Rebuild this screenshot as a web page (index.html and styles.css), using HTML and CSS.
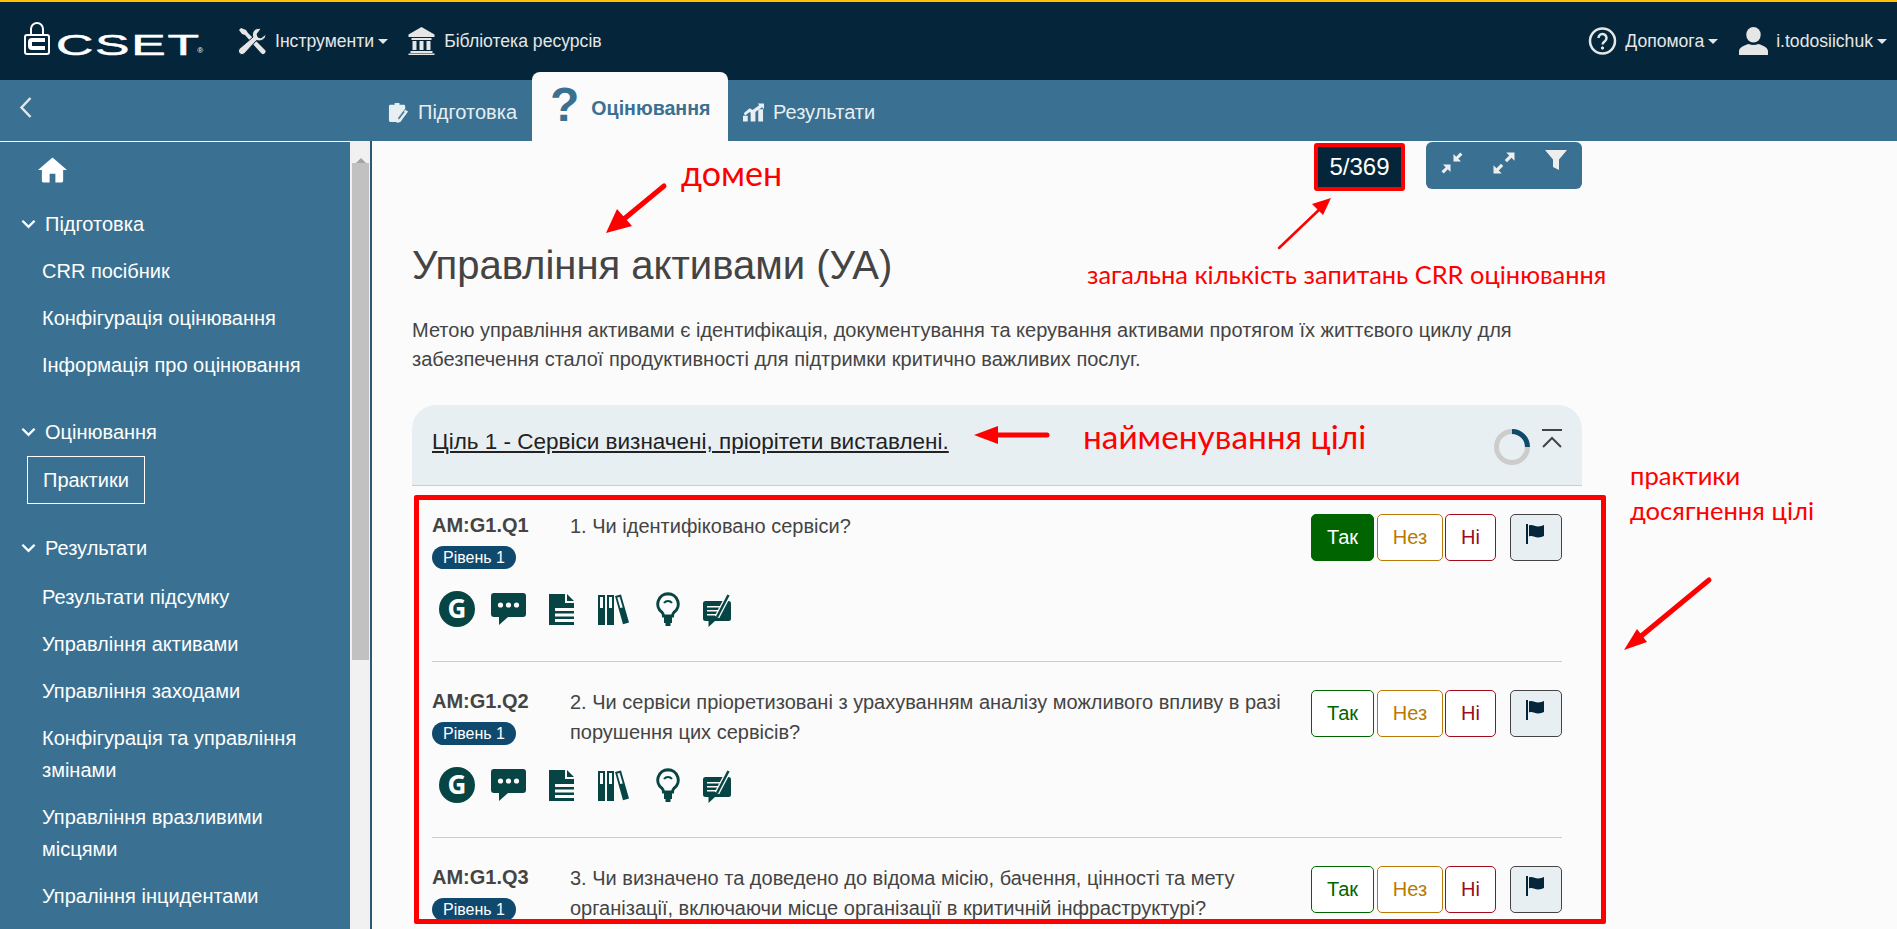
FILE: index.html
```html
<!DOCTYPE html>
<html lang="uk">
<head>
  <meta charset="UTF-8" />
  <meta name="viewport" content="width=device-width, initial-scale=1.0" />
  <title>CSET</title>
  <link rel="stylesheet" href="styles.css">
</head>
<body>

<svg class="sprite" aria-hidden="true">
  <symbol id="i-comment" viewBox="0 0 35 32">
    <path d="M3 0h29a3 3 0 0 1 3 3v18a3 3 0 0 1-3 3H17l-9 8v-8H3a3 3 0 0 1-3-3V3a3 3 0 0 1 3-3z"/>
    <circle cx="9.5" cy="12" r="2.6" fill="#fbfbfb"/><circle cx="17.5" cy="12" r="2.6" fill="#fbfbfb"/><circle cx="25.5" cy="12" r="2.6" fill="#fbfbfb"/>
  </symbol>
  <symbol id="i-doc" viewBox="0 0 25 31">
    <path d="M0 0h16v9h9v22H0z"/><path d="M18 0l7 7h-7z"/>
    <path d="M6 14h19v3H6zM6 19.5h19v3H6zM6 25h19v3H6z" fill="#fbfbfb"/>
  </symbol>
  <symbol id="i-books" viewBox="0 0 31 31">
    <path d="M0 1h7v30H0zM9 1h7v30H9z"/><path d="M17 2l6-1.500 8 28-6 1.700z"/>
    <path d="M2 3h3v11H2zM11 3h3v11h-3z" fill="#fbfbfb"/><path d="M19.300 3.500l2.400-.6 3 10.500-2.400.7z" fill="#fbfbfb"/>
  </symbol>
  <symbol id="i-bulb" viewBox="0 0 24 34">
    <path d="M12 1.700a10.300 10.300 0 0 0-6 18.600c1.200 1 1.500 2 1.500 3.700h9c0-1.700.3-2.700 1.500-3.700a10.300 10.300 0 0 0-6-18.600z" fill="none" stroke="currentColor" stroke-width="3"/>
    <path d="M8 11a5 5 0 0 1 8 0" fill="none" stroke="currentColor" stroke-width="2"/>
    <path d="M8 23h8v8h-1.500v3h-5v-3H8z"/>
  </symbol>
  <symbol id="i-note" viewBox="0 0 28 35">
    <path d="M2.500 9h23a2.500 2.500 0 0 1 2.500 2.500v15a2.500 2.500 0 0 1-2.500 2.500H12l-6.500 6v-6h-3A2.500 2.500 0 0 1 0 26.500v-15A2.500 2.500 0 0 1 2.500 9z"/>
    <path d="M4 14h13v1.600H4zM4 18h11v1.600H4zM4 22h9v1.600H4z" fill="#fbfbfb"/>
    <path d="M14 25L25.500 3" fill="none" stroke="#fbfbfb" stroke-width="5"/>
    <path d="M14 25L25.500 3" fill="none" stroke="currentColor" stroke-width="2.500"/>
  </symbol>
  <symbol id="i-flag" viewBox="0 0 20 20">
    <path d="M0 0h2v20H0zM3 1.500c3-1.500 6 1 9 1s4-1 6-1.500v11c-2 .5-3 1.500-6 1.500s-6-2.500-9-1z"/>
  </symbol>
</svg>

<header class="topbar">
  <a class="logo">
    <svg class="logo-lock" viewBox="0 0 26 33" fill="none" stroke="#fff">
      <path d="M7 13V7a6 6 0 0 1 12 0v6" stroke-width="2"/>
      <rect x="1" y="13" width="24" height="19" rx="2" stroke-width="2"/>
      <path d="M21 18H8a2 2 0 0 0-2 2v4a2 2 0 0 0 2 2h13" stroke-width="4"/>
    </svg>
    <span class="logo-text">CSET</span>
    <span class="logo-mark">®</span>
  </a>
  <a class="top-link">
    <svg class="top-icon" viewBox="0 0 29 28">
      <path d="M3 1L1 3l3 4 3 1 16 18a2.200 2.200 0 0 0 4-3L10 6 8 3z" fill="#e6e6e6"/>
      <path d="M28 7l-5 4-3-1-1-3 4-5c-4-1.500-8 .5-8.500 5-.1 1.500 0 2 .5 3L1.500 21.500a3.500 3.500 0 0 0 5 5L18.500 13.500c4 1.500 9.500-1 9.500-6.500z" fill="#e6e6e6" stroke="#05263a" stroke-width="1"/>
    </svg>
    Інструменти <i class="caret"></i>
  </a>
  <a class="top-link">
    <svg class="top-icon" viewBox="0 0 28 28" fill="#e6e6e6">
      <path d="M14 0l13 7.500V10H1V7.500zM4 11h20v2H4zM5 14h4v9H5zM12 14h4v9h-4zM19 14h4v9h-4zM3 24h22v2H3zM1 26.500h26V28H1z"/>
    </svg>
    Бібліотека ресурсів
  </a>
  <div class="top-right">
    <a class="top-link">
      <svg class="top-icon" viewBox="0 0 29 28" fill="none" stroke="#e6e6e6">
        <circle cx="14.500" cy="14" r="12.500" stroke-width="2.500"/>
        <path d="M10.500 11a4 4 0 1 1 6.300 3.200c-1.500 1-2.300 1.600-2.300 3.300" stroke-width="2.500"/>
        <circle cx="14.500" cy="21" r="1.200" fill="#e6e6e6" stroke-width="1"/>
      </svg>
      Допомога <i class="caret"></i>
    </a>
    <a class="top-link">
      <svg class="top-icon" viewBox="0 0 30 29" fill="#e6e6e6">
        <ellipse cx="15" cy="8" rx="7.500" ry="8"/>
        <path d="M0 29v-4c0-4 5-6 10-7.500 3 1.500 7 1.500 10 0 5 1.500 10 3.500 10 7.500v4z"/>
      </svg>
      i.todosiichuk <i class="caret"></i>
    </a>
  </div>
</header>

<nav class="subnav">
  <a class="back">
    <svg viewBox="0 0 14 23" fill="none" stroke="#e6e6e6" stroke-width="2.500"><path d="M12 2L3 11.500 12 21"/></svg>
  </a>
  <div class="tabs">
    <a class="tab">
      <svg class="tab-icon" viewBox="0 0 20 22">
        <path d="M1.500 3H6V1h5v2h4.500A1.500 1.500 0 0 1 17 4.500V7l-7 9-1 5H1.500A1.500 1.500 0 0 1 0 19.500v-15A1.500 1.500 0 0 1 1.500 3z" fill="#e8eef2"/>
        <path d="M17 8l3 2-8 11-4 1 1-4z" fill="#e8eef2"/>
        <path d="M16 10l-6 8" stroke="#3a7192" stroke-width="1.200"/>
      </svg>
      Підготовка
    </a>
    <a class="tab active"><span class="tab-question">?</span> Оцінювання</a>
    <a class="tab">
      <svg class="tab-icon" viewBox="0 0 22 19" fill="#e8eef2">
        <path d="M0 13h5v6H0zM8 9h5v10H8zM16 6h5v13h-5z"/>
        <path d="M1 10l6-5 3 2 7-5-1.500-2H22v6l-2-2-10 7-3-2-5 4z"/>
      </svg>
      Результати
    </a>
  </div>
</nav>

<div class="layout">
  <aside class="sidebar">
    <a class="home">
      <svg viewBox="0 0 30 26" fill="#fff"><path d="M15 0l15 13h-4v11.500a1.500 1.500 0 0 1-1.500 1.500H18v-9h-6v9H5.500A1.500 1.500 0 0 1 4 24.500V13H0z"/></svg>
    </a>

    <div class="side-group">
      <div class="side-head"><svg viewBox="0 0 16 10" fill="none" stroke="#fff" stroke-width="2.500"><path d="M1.500 1.500L8 8l6.500-6.500"/></svg> Підготовка</div>
      <a class="side-item">CRR посібник</a>
      <a class="side-item">Конфігурація оцінювання</a>
      <a class="side-item">Інформація про оцінювання</a>
    </div>

    <div class="side-group">
      <div class="side-head"><svg viewBox="0 0 16 10" fill="none" stroke="#fff" stroke-width="2.500"><path d="M1.500 1.500L8 8l6.500-6.500"/></svg> Оцінювання</div>
      <a class="side-item current">Практики</a>
    </div>

    <div class="side-group">
      <div class="side-head"><svg viewBox="0 0 16 10" fill="none" stroke="#fff" stroke-width="2.500"><path d="M1.500 1.500L8 8l6.500-6.500"/></svg> Результати</div>
      <a class="side-item">Результати підсумку</a>
      <a class="side-item">Управління активами</a>
      <a class="side-item">Управління заходами</a>
      <a class="side-item">Конфігурація та управління змінами</a>
      <a class="side-item">Управління вразливими місцями</a>
      <a class="side-item">Упраління інцидентами</a>
    </div>
  </aside>

  <div class="scrollbar">
    <div class="scroll-up"></div>
    <div class="scroll-thumb"></div>
  </div>

  <main class="content">
    <div class="tools">
      <div class="counter">5/369</div>
      <div class="toolbar">
        <button>
          <svg viewBox="0 0 16 16"><path d="M9 7V2l1.800 1.800L13.500 1 15 2.500l-2.800 2.700L14 7zM7 9v5l-1.800-1.800L2.500 15 1 13.500l2.800-2.700L2 9z"/></svg>
        </button>
        <button>
          <svg viewBox="0 0 16 16"><path d="M15 1v5.500l-2-2-3 3L8.500 6l3-3-2-2zM1 15V9.500l2 2 3-3L7.500 10l-3 3 2 2z"/></svg>
        </button>
        <button class="filter">
          <svg viewBox="0 0 22 20"><path d="M0 0h22l-8 9.500V20l-6-3V9.500z"/></svg>
        </button>
      </div>
    </div>

    <h1>Управління активами (УА)</h1>
    <p class="intro">Метою управління активами є ідентифікація, документування та керування активами протягом їх життєвого циклу для забезпечення сталої продуктивності для підтримки критично важливих послуг.</p>

    <section class="goal">
      <div class="goal-head">
        <span class="goal-title">Ціль 1 - Сервіси визначені, пріорітети виставлені.</span>
        <svg class="goal-progress" viewBox="0 0 36 36" fill="none" stroke-width="5">
          <circle cx="18" cy="18" r="15.500" stroke="#ccc"/>
          <path d="M18 2.500A15.500 15.500 0 0 1 33.500 18" stroke="#0f4a6b"/>
        </svg>
        <svg class="goal-toggle" viewBox="0 0 20 19" fill="none" stroke="#444" stroke-width="2"><path d="M0 1h20M1 18l9-9 9 9"/></svg>
      </div>

      <article class="question">
        <div class="q-main">
          <div class="q-id"><b>AM:G1.Q1</b><span class="badge">Рівень 1</span></div>
          <div class="q-text">1. Чи ідентифіковано сервіси?</div>
          <div class="answers">
            <button class="ans yes on">Так</button><button class="ans na">Нез</button><button class="ans no">Ні</button><button class="ans flag"><svg viewBox="0 0 20 20"><use href="#i-flag"/></svg></button>
          </div>
        </div>
        <div class="q-icons">
          <span class="g-icon">G</span>
          <svg class="ic-comment"><use href="#i-comment"/></svg>
          <svg class="ic-doc"><use href="#i-doc"/></svg>
          <svg class="ic-books"><use href="#i-books"/></svg>
          <svg class="ic-bulb"><use href="#i-bulb"/></svg>
          <svg class="ic-note"><use href="#i-note"/></svg>
        </div>
      </article>

      <article class="question">
        <div class="q-main">
          <div class="q-id"><b>AM:G1.Q2</b><span class="badge">Рівень 1</span></div>
          <div class="q-text">2. Чи сервіси пріоретизовані з урахуванням аналізу можливого впливу в разі порушення цих сервісів?</div>
          <div class="answers">
            <button class="ans yes">Так</button><button class="ans na">Нез</button><button class="ans no">Ні</button><button class="ans flag"><svg viewBox="0 0 20 20"><use href="#i-flag"/></svg></button>
          </div>
        </div>
        <div class="q-icons">
          <span class="g-icon">G</span>
          <svg class="ic-comment"><use href="#i-comment"/></svg>
          <svg class="ic-doc"><use href="#i-doc"/></svg>
          <svg class="ic-books"><use href="#i-books"/></svg>
          <svg class="ic-bulb"><use href="#i-bulb"/></svg>
          <svg class="ic-note"><use href="#i-note"/></svg>
        </div>
      </article>

      <article class="question">
        <div class="q-main">
          <div class="q-id"><b>AM:G1.Q3</b><span class="badge">Рівень 1</span></div>
          <div class="q-text">3. Чи визначено та доведено до відома місію, бачення, цінності та мету організації, включаючи місце організації в критичній інфраструктурі?</div>
          <div class="answers">
            <button class="ans yes">Так</button><button class="ans na">Нез</button><button class="ans no">Ні</button><button class="ans flag"><svg viewBox="0 0 20 20"><use href="#i-flag"/></svg></button>
          </div>
        </div>
      </article>
    </section>
  </main>
</div>

<!-- red notes drawn over the screenshot -->
<div class="practice-frame"></div>
<span class="note note-domain">домен</span>
<span class="note note-total">загальна кількість запитань CRR оцінювання</span>
<span class="note note-goal">найменування цілі</span>
<span class="note note-practice">практики<br>досягнення цілі</span>
<svg class="arrows" viewBox="0 0 1897 929" fill="#f00" stroke="#f00" stroke-linecap="round">
  <path d="M664 186L624 219" stroke-width="5" fill="none"/>
  <path d="M606 233L617 209 632 226z" stroke="none"/>
  <path d="M1279 248L1322 207" stroke-width="2.500" fill="none"/>
  <path d="M1331 198L1323 215 1312 204z" stroke="none"/>
  <path d="M1047 435H992" stroke-width="5" fill="none"/>
  <path d="M974 435L998 426V444z" stroke="none"/>
  <path d="M1709 580L1640 637" stroke-width="5" fill="none"/>
  <path d="M1624 650L1637 629 1647 642z" stroke="none"/>
</svg>

</body>
</html>
```

FILE: styles.css
```css
* {
  box-sizing: border-box;
}

body {
  margin: 0;
  height: 100vh;
  display: flex;
  flex-direction: column;
  overflow: hidden;
  font-family: "Liberation Sans", Arial, sans-serif;
  font-size: 20px;
  color: #444;
  background: #fbfbfb;
}

.sprite {
  display: none;
}

/* top bar */
.topbar {
  height: 80px;
  flex: none;
  display: flex;
  align-items: center;
  padding: 0 10px 0 24px;
  background: #05263a;
  border-top: 2px solid #ffc107;
  color: #e6e6e6;
}

.logo {
  width: 214px;
  margin-top: -6px;
  display: flex;
  align-items: flex-end;
  height: 33px;
}

.logo-lock {
  width: 26px;
  height: 33px;
}

.logo-text {
  display: inline-block;
  margin-left: 6px;
  font-size: 29px;
  line-height: 24px;
  color: #fff;
  letter-spacing: 1px;
  -webkit-text-stroke: 0.5px #fff;
  transform: translateY(2px) scaleX(1.78);
  transform-origin: left center;
}

.logo-mark {
  margin-left: 60px;
  font-size: 8px;
  line-height: 8px;
  color: #fff;
}

.top-link {
  display: flex;
  align-items: center;
  gap: 8px;
  margin-right: 19px;
  font-size: 17.6px;
}

.top-icon {
  width: 29px;
  height: 28px;
}

.caret {
  width: 0;
  height: 0;
  margin-left: -4px;
  border-left: 5px solid transparent;
  border-right: 5px solid transparent;
  border-top: 5px solid #e6e6e6;
}

.top-right {
  margin-left: auto;
  display: flex;
}

.top-right .top-link {
  margin-right: 0;
  margin-left: 21px;
}

/* second bar with tabs */
.subnav {
  height: 61px;
  flex: none;
  display: flex;
  background: #3a7192;
}

.back {
  width: 388px;
  padding: 16px 0 0 18px;
}

.back svg {
  width: 15px;
  height: 23px;
}

.tabs {
  display: flex;
  align-items: flex-end;
}

.tab {
  height: 61px;
  display: flex;
  align-items: center;
  gap: 9px;
  padding-top: 4px;
  font-size: 20px;
  color: #e8eef2;
}

.tab.active {
  height: 69px;
  width: 196px;
  margin: -8px 15px 0 15px;
  padding: 4px 0 0 18px;
  gap: 12px;
  border-radius: 8px 8px 0 0;
  background: #fbfbfb;
  color: #3a7192;
  font-size: 19.6px;
  font-weight: bold;
}

.tab-icon {
  width: 21px;
  height: 21px;
}

.tab-question {
  font-size: 48px;
  line-height: 48px;
  margin-top: -8px;
}

/* layout */
.layout {
  flex: 1;
  min-height: 0;
  display: flex;
}

.sidebar {
  width: 350px;
  flex: none;
  overflow: hidden;
  background: #3a7192;
  border-top: 1px solid #fff;
  color: #fff;
}

.home {
  display: block;
  padding: 15px 0 0 38px;
  margin-bottom: 25px;
}

.home svg {
  display: block;
  width: 29px;
  height: 26px;
}

.side-group {
  padding-bottom: 20px;
}

.side-head {
  display: flex;
  align-items: center;
  gap: 9px;
  padding-left: 21px;
  line-height: 32px;
  margin-bottom: 15px;
}

.side-group:last-child .side-head {
  margin-bottom: 17px;
}

.side-head svg {
  width: 15px;
  height: 10px;
}

.side-item {
  display: block;
  padding: 0 40px 0 42px;
  line-height: 32px;
  margin-bottom: 15px;
}

.side-item.current {
  width: 118px;
  margin: -7px 0 8px 27px;
  padding: 7px 15px;
  border: 1px solid #fff;
}

.scrollbar {
  width: 20px;
  flex: none;
  padding: 0 1px 0 2px;
  background: #f1f1f1;
}

.scroll-up {
  height: 22px;
  width: 0;
  margin: 0 auto;
  border-left: 5px solid transparent;
  border-right: 5px solid transparent;
  border-bottom: 5px solid #a3a3a3;
  border-top: 8px solid transparent;
}

.scroll-thumb {
  height: 497px;
  background: #c1c1c1;
}

/* main part */
.content {
  flex: 1;
  min-width: 0;
  overflow: hidden;
  padding: 0 315px 0 40px;
  border-left: 2px solid #2c5870;
}

.tools {
  display: flex;
  justify-content: flex-end;
  gap: 21px;
}

.counter {
  width: 91px;
  height: 48px;
  margin-top: 2px;
  border: 4px solid #f00;
  border-radius: 3px;
  background: #05263a;
  color: #fff;
  font-size: 24px;
  line-height: 40px;
  text-align: center;
}

.toolbar {
  display: flex;
  width: 156px;
  height: 47px;
  margin-top: 1px;
  border-radius: 6px;
  background: #3a7192;
}

.toolbar button {
  flex: 1;
  padding: 0 0 3px;
  border: 0;
  background: none;
}

.toolbar svg {
  width: 24px;
  height: 24px;
  fill: #eee;
}

.toolbar .filter svg {
  width: 22px;
  height: 20px;
  margin-bottom: 5px;
}

h1 {
  margin: 50px 0 0;
  font-size: 40px;
  font-weight: 400;
  line-height: 48px;
  color: #444;
}

.intro {
  margin: 27px 0 0;
  line-height: 29px;
  width: 1130px;
}

.goal {
  margin-top: 31px;
}

.goal-head {
  height: 81px;
  display: flex;
  align-items: center;
  padding: 0 20px;
  border-radius: 24px 24px 0 0;
  border-bottom: 1px solid #ccc;
  background: #e8eff3;
}

.goal-title {
  flex: 1;
  font-size: 22.5px;
  color: #222;
  text-decoration: underline;
  margin-bottom: 6px;
}

.goal-progress {
  width: 36px;
  height: 36px;
  margin: 3px 12px 0 0;
}

.goal-toggle {
  width: 20px;
  height: 19px;
  margin-top: -14px;
}

.question {
  margin: 0 20px;
  height: 176px;
  padding-top: 25px;
  border-bottom: 1px solid #ccc;
}

.q-main {
  display: flex;
  height: 80px;
}

.q-id {
  width: 138px;
  flex: none;
  line-height: 29px;
}

.q-id b {
  display: block;
  color: #444;
}

.badge {
  display: block;
  width: 84px;
  height: 23px;
  margin-top: 6px;
  border-radius: 12px;
  background: #0f4a6e;
  color: #fff;
  font-size: 16px;
  line-height: 23px;
  text-align: center;
}

.q-text {
  width: 720px;
  line-height: 30px;
}

.answers {
  margin-left: auto;
  display: flex;
  gap: 3px;
  padding-top: 3px;
}

.ans {
  height: 47px;
  padding: 0;
  border: 1px solid;
  border-radius: 5px;
  background: #fff;
  font-family: inherit;
  font-size: 20px;
}

.yes {
  width: 63px;
  border-color: #006400;
  color: #006400;
}

.yes.on {
  background: #006400;
  color: #fff;
}

.na {
  width: 66px;
  border-color: #b87a00;
  color: #b87a00;
}

.no {
  width: 51px;
  margin-left: -1px;
  border-color: #a00c1c;
  color: #a00c1c;
}

.flag {
  width: 52px;
  margin-left: 11px;
  border-color: #444;
  background: #e8eff3;
}

.flag svg {
  width: 20px;
  height: 20px;
  fill: #05263a;
  margin-bottom: 2px;
}

.q-icons {
  display: flex;
  align-items: center;
  height: 36px;
  padding-left: 7px;
  color: #064544;
  fill: #064544;
}

.g-icon {
  width: 36px;
  height: 36px;
  margin-right: 16px;
  border-radius: 50%;
  background: #064544;
  color: #fff;
  font-family: "Open Sans", sans-serif;
  font-size: 26px;
  font-weight: 700;
  line-height: 35px;
  text-align: center;
}

.ic-comment { width: 35px; height: 32px; margin-right: 23px; }
.ic-doc { width: 25px; height: 31px; margin-right: 24px; }
.ic-books { width: 31px; height: 31px; margin-right: 27px; }
.ic-bulb { width: 24px; height: 34px; margin-right: 23px; }
.ic-note { width: 28px; height: 35px; }

/* notes on top of the page */
.practice-frame {
  position: absolute;
  left: 414px;
  top: 495px;
  width: 1192px;
  height: 429px;
  border: 5px solid #f00;
  border-radius: 2px;
}

.note {
  position: absolute;
  color: #f00;
  font-family: Lato, "Noto Sans", sans-serif;
  white-space: nowrap;
}

.note-domain {
  left: 681px;
  top: 152px;
  font-size: 34px;
}

.note-total {
  left: 1087px;
  top: 259px;
  font-size: 25.4px;
}

.note-goal {
  left: 1083px;
  top: 416px;
  font-size: 33.4px;
}

.note-practice {
  left: 1630px;
  top: 458px;
  font-size: 25.6px;
  line-height: 35px;
}

.arrows {
  position: absolute;
  left: 0;
  top: 0;
  width: 1897px;
  height: 929px;
  pointer-events: none;
}
```
